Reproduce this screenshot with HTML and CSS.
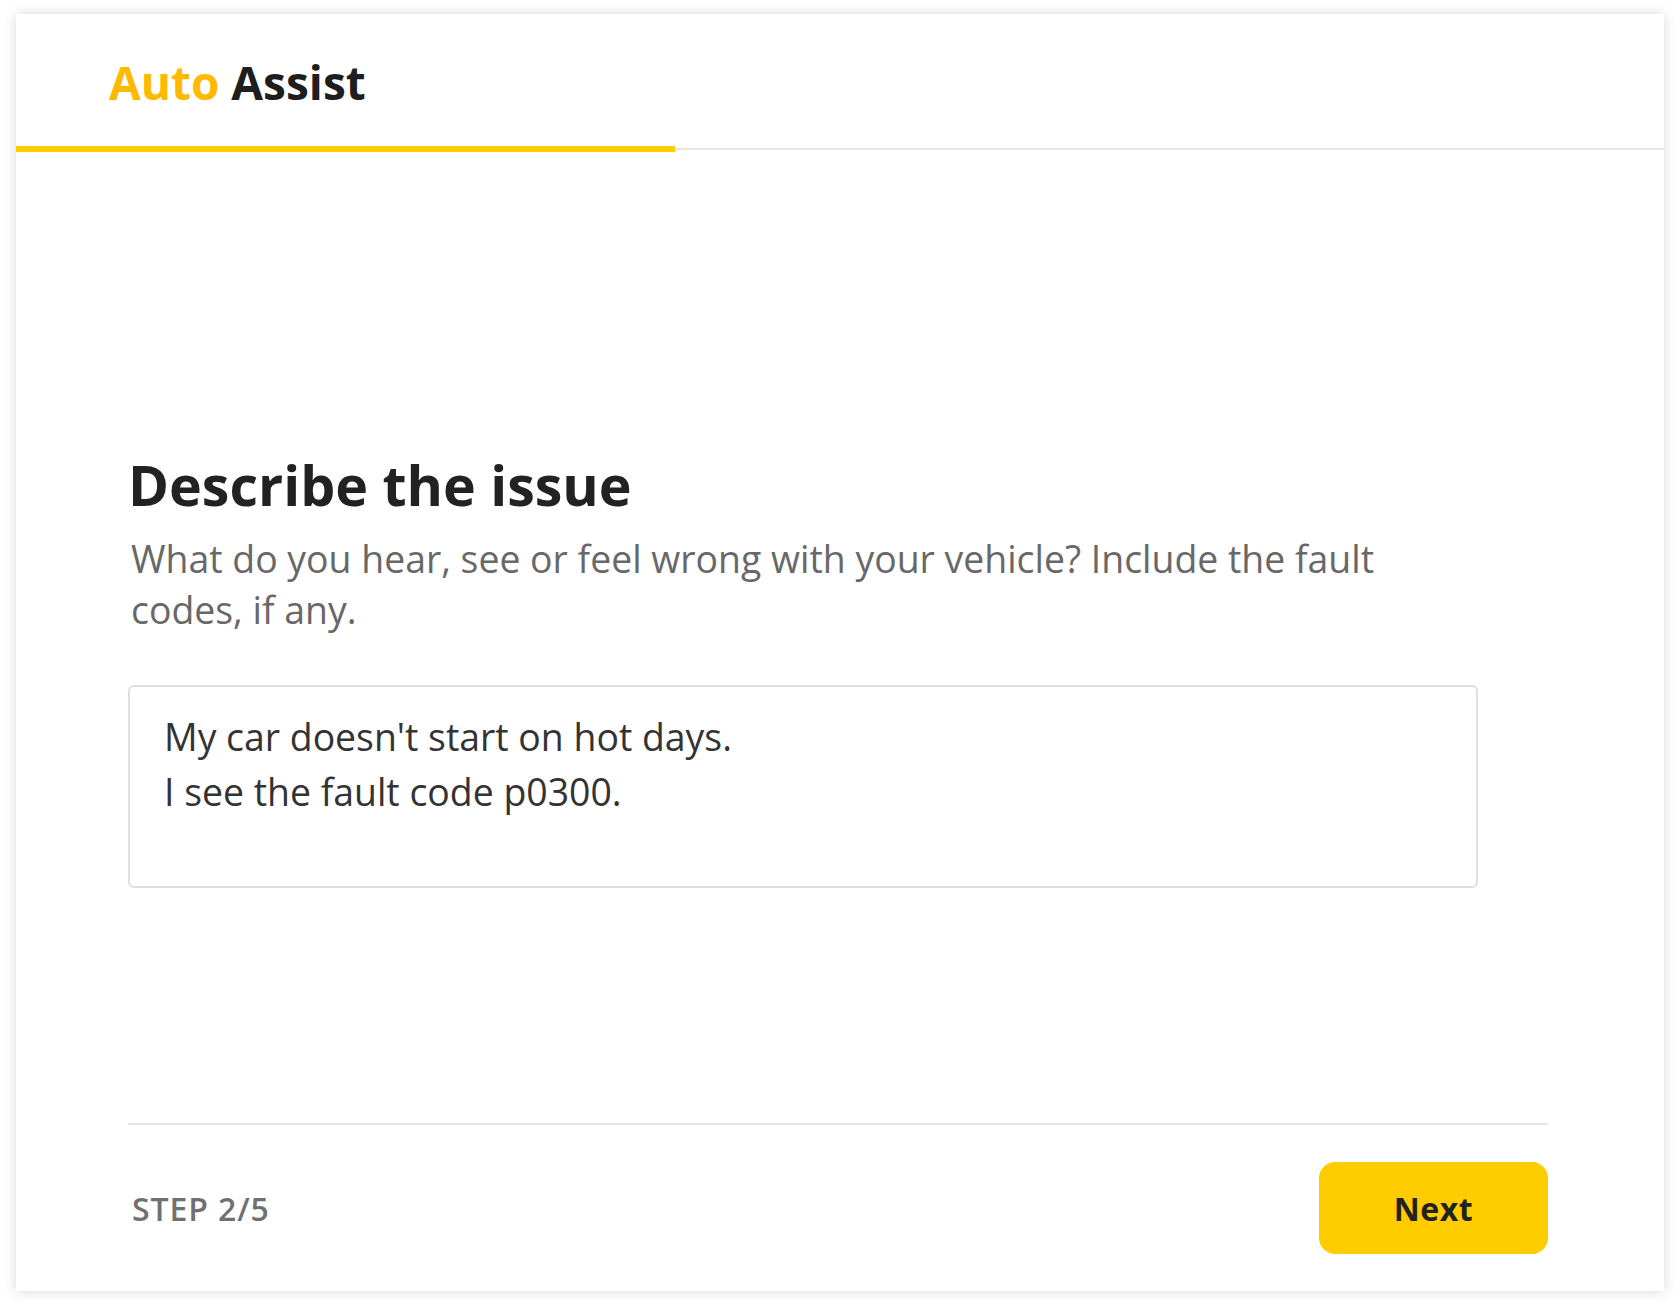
FILE: index.html
```html
<!DOCTYPE html>
<html lang="en">
<head>
<meta charset="utf-8">
<title>Auto Assist</title>
<link rel="stylesheet" href="styles.css">
</head>
<body>
<div class="card">
  <header class="header">
    <div class="brand"><span class="brand-auto">Auto</span> Assist</div>
  </header>
  <div class="progress"><div class="progress-fill" style="width:40%"></div></div>
  <main class="main">
    <h1 class="title">Describe the issue</h1>
    <p class="subtitle">What do you hear, see or feel wrong with your vehicle? Include the fault codes, if any.</p>
    <textarea class="issue" rows="3">My car doesn't start on hot days.
I see the fault code p0300.</textarea>
    <footer class="footer">
      <span class="step">STEP 2/5</span>
      <button class="next" type="button">Next</button>
    </footer>
  </main>
</div>
</body>
</html>
```
FILE: styles.css
```css
* { box-sizing: border-box; }
html, body { margin: 0; padding: 0; background: #ffffff; }
body {
  font-family: "Open Sans", "Noto Sans", sans-serif;
  padding: 14px 16px 19px 16px;
}
.card {
  height: 1277px;
  background: #fff;
  box-shadow: 0 0 12px rgba(0, 0, 0, 0.16);
  display: flex;
  flex-direction: column;
}
.header {
  height: 134px;
  padding: 37px 0 0 93px;
}
.brand {
  font-size: 46px;
  font-weight: 700;
  color: #1e1e1e;
  line-height: 63px;
}
.brand-auto { color: #ffb900; }
.progress {
  position: relative;
  height: 2px;
  background: #e6e6e6;
}
.progress-fill {
  position: absolute;
  left: 0;
  top: -2px;
  height: 6px;
  background: #ffcc00;
}
.main {
  flex: 1;
  display: flex;
  flex-direction: column;
  padding: 299px 116px 0 112px;
}
.title {
  margin: 0;
  font-size: 55.5px;
  line-height: 72px;
  font-weight: 700;
  color: #222;
}
.subtitle {
  margin: 12px 0 0 0;
  padding-left: 3px;
  max-width: 1350px;
  font-size: 37.4px;
  line-height: 51px;
  color: #686868;
}
.issue {
  display: block;
  margin-top: 50px;
  width: 1350px;
  height: 203px;
  padding: 22px 34px;
  border: 2px solid #dedede;
  border-radius: 6px;
  font-family: "Open Sans", "Noto Sans", sans-serif;
  font-size: 37.4px;
  line-height: 55px;
  color: #333;
  resize: none;
  outline: none;
}
.footer {
  margin-top: auto;
  border-top: 2px solid #e6e6e6;
  padding: 37px 0;
  display: flex;
  align-items: center;
  justify-content: space-between;
}
.step {
  font-size: 32px;
  font-weight: 600;
  letter-spacing: 0.9px;
  color: #707070;
  padding-left: 4px;
}
.next {
  width: 229px;
  height: 92px;
  border: none;
  border-radius: 16px;
  background: #ffcc00;
  font-family: "Open Sans", "Noto Sans", sans-serif;
  font-size: 32px;
  font-weight: 700;
  color: #222;
  letter-spacing: 0.5px;
  cursor: pointer;
}
```
